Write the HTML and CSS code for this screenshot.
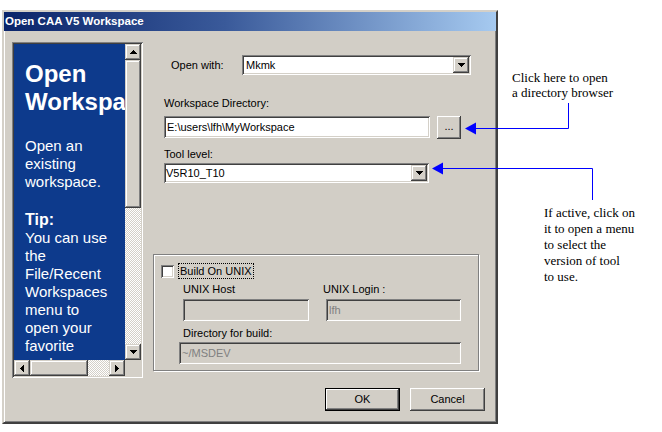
FILE: index.html
```html
<!DOCTYPE html>
<html>
<head>
<meta charset="utf-8">
<title>Open CAA V5 Workspace</title>
<link rel="stylesheet" href="styles.css">
</head>
<body>
<div class="page">
  <div class="dialog">
    <div class="titlebar">Open CAA V5 Workspace</div>
    <div class="body">
      <div class="main">
        <div class="helpframe">
          <div class="help">
            <div class="help-title">Open<br>Workspace</div>
            <p class="help-text first">Open an<br>existing<br>workspace.</p>
            <div class="help-tip">Tip:</div>
            <p class="help-text">You can use<br>the<br>File/Recent<br>Workspaces<br>menu to<br>open your<br>favorite<br>workspaces.</p>
          </div>
          <div class="vscroll">
            <div class="sbtn"><svg width="7" height="4" viewBox="0 0 7 4"><path d="M3 0h1v1H3zM2 1h3v1H2zM1 2h5v1H1zM0 3h7v1H0z"/></svg></div>
            <div class="sthumb vthumb"></div>
            <div class="track"></div>
            <div class="sbtn"><svg width="7" height="4" viewBox="0 0 7 4"><path d="M0 0h7v1H0zM1 1h5v1H1zM2 2h3v1H2zM3 3h1v1H3z"/></svg></div>
          </div>
          <div class="hscroll">
            <div class="sbtn"><svg width="4" height="7" viewBox="0 0 4 7"><path d="M0 3h1v1H0zM1 2h1v3H1zM2 1h1v5H2zM3 0h1v7H3z"/></svg></div>
            <div class="sthumb hthumb"></div>
            <div class="track htrack"></div>
            <div class="sbtn"><svg width="4" height="7" viewBox="0 0 4 7"><path d="M0 0h1v7H0zM1 1h1v5H1zM2 2h1v3H2zM3 3h1v1H3z"/></svg></div>
          </div>
          <div class="corner"></div>
        </div>

        <div class="form">
          <div class="openwith">
            <span class="ow-label">Open with:</span>
            <div class="combo combo-ow">
              <span class="combo-text">Mkmk</span>
              <div class="dropbtn"><svg width="7" height="4" viewBox="0 0 7 4"><path d="M0 0h7v1H0zM1 1h5v1H1zM2 2h3v1H2zM3 3h1v1H3z"/></svg></div>
            </div>
          </div>

          <div class="label ws-label">Workspace Directory:</div>
          <div class="ws-row">
            <div class="field ws-field">E:\users\lfh\MyWorkspace</div>
            <div class="btn browse">...</div>
          </div>

          <div class="label tool-label">Tool level:</div>
          <div class="combo combo-tool">
            <span class="combo-text tool-text">V5R10_T10</span>
            <div class="dropbtn"><svg width="7" height="4" viewBox="0 0 7 4"><path d="M0 0h7v1H0zM1 1h5v1H1zM2 2h3v1H2zM3 3h1v1H3z"/></svg></div>
          </div>

          <div class="group">
            <div class="check-row">
              <div class="checkbox"></div>
              <span class="focus">Build On UNIX</span>
            </div>
            <div class="unix-grid">
              <div class="glabel">UNIX Host</div>
              <div class="glabel login-label">UNIX Login :</div>
              <div class="field disabled host-field"></div>
              <div class="field disabled login-field">lfh</div>
            </div>
            <div class="glabel dir-label">Directory for build:</div>
            <div class="field disabled dir-field">~/MSDEV</div>
          </div>
        </div>
      </div>

      <div class="buttons">
        <div class="btn default">OK</div>
        <div class="btn">Cancel</div>
      </div>
    </div>
  </div>

  <svg class="arrows" width="662" height="432" viewBox="0 0 662 432">
    <path d="M475 128.5H568.5V103" fill="none" stroke="#0000ff" stroke-width="1"/>
    <polygon points="465,128.5 476,122.5 476,134.5" fill="#0000ff"/>
    <path d="M442 168.5H592.5V200" fill="none" stroke="#0000ff" stroke-width="1"/>
    <polygon points="432,168.5 443,162.5 443,174.5" fill="#0000ff"/>
  </svg>

  <div class="note note-browse">Click here to open<br>a directory browser</div>
  <div class="note note-tool">If active, click on<br>it to open a menu<br>to select the<br>version of tool<br>to use.</div>
</div>
</body>
</html>
```

FILE: styles.css
```css
* { box-sizing: border-box; }

html, body {
  margin: 0;
  padding: 0;
  background: #ffffff;
}

body {
  font-family: "Liberation Sans", Arial, sans-serif;
  font-size: 11px;
  color: #000;
}

.page {
  position: relative;
  width: 662px;
  height: 432px;
  padding: 10px 0 0 2px;
}

/* ---------- dialog frame ---------- */
.dialog {
  width: 496px;
  height: 414px;
  background: #d2cec6;
  border: 2px solid;
  border-color: #d4d0c8 #404040 #404040 #d4d0c8;
  box-shadow: inset 1px 1px 0 #ffffff, inset -1px -1px 0 #808080;
}

.titlebar {
  height: 19px;
  line-height: 19px;
  padding-left: 1px;
  color: #ffffff;
  font-weight: bold;
  font-size: 11.5px;
  background: linear-gradient(to right, #0a246a 0%, #3a5a9a 45%, #a6caf0 100%);
  white-space: nowrap;
}

.body {
  padding: 11px 0 0 8px;
}

.main {
  display: flex;
  gap: 10px;
}

/* ---------- help panel ---------- */
.helpframe {
  width: 131px;
  height: 336px;
  padding: 2px;
  box-shadow: inset 1px 1px 0 #808080, inset -1px -1px 0 #ffffff,
              inset 2px 2px 0 #404040, inset -2px -2px 0 #d4d0c8;
  display: grid;
  grid-template-columns: 111px 16px;
  grid-template-rows: 316px 16px;
}

.help {
  background: #0d3a8c;
  color: #ffffff;
  overflow: hidden;
  white-space: nowrap;
  padding: 16px 0 0 11px;
}

.help-title {
  font-size: 24px;
  font-weight: bold;
  line-height: 28px;
}

.help-text {
  margin: 0;
  font-size: 15px;
  line-height: 18px;
}

.help-text.first {
  margin-top: 21px;
}

.help-tip {
  margin-top: 20px;
  font-size: 16px;
  font-weight: bold;
  line-height: 18px;
}

.vscroll {
  display: flex;
  flex-direction: column;
}

.hscroll {
  display: flex;
}

.sbtn, .sthumb {
  width: 16px;
  height: 16px;
  flex: none;
  background: #d4d0c8;
  box-shadow: inset -1px -1px 0 #404040, inset 1px 1px 0 #d4d0c8,
              inset -2px -2px 0 #808080, inset 2px 2px 0 #ffffff;
  display: flex;
  align-items: center;
  justify-content: center;
}

.sbtn svg { display: block; fill: #000; }

.vthumb { height: 148px; }
.hthumb { width: 58px; }

.track {
  flex: 1;
  background-color: #d4d0c8;
  background-image: repeating-conic-gradient(#ffffff 0% 25%, #d4d0c8 0% 50%);
  background-size: 2px 2px;
}

.corner { background: #d4d0c8; }

/* ---------- form ---------- */
.form {
  width: 326px;
  display: flex;
  flex-direction: column;
}

.label {
  line-height: 13px;
  margin-left: 11px;
}

.openwith {
  margin-top: 13px;
  height: 20px;
  display: flex;
  align-items: center;
}

.ow-label {
  width: 89px;
  padding-left: 18px;
}

.combo {
  height: 20px;
  background: #ffffff;
  padding: 2px;
  display: flex;
  align-items: center;
  box-shadow: inset 1px 1px 0 #808080, inset -1px -1px 0 #ffffff,
              inset 2px 2px 0 #404040, inset -2px -2px 0 #d4d0c8;
}

.combo-ow { width: 229px; }

.combo-tool {
  width: 265px;
  margin-left: 11px;
  margin-top: 2px;
}

.combo-text {
  flex: 1;
  padding-left: 2px;
  line-height: 16px;
}

.tool-text { padding-left: 0; }

.dropbtn {
  width: 16px;
  height: 16px;
  background: #d4d0c8;
  box-shadow: inset -1px -1px 0 #404040, inset 1px 1px 0 #d4d0c8,
              inset -2px -2px 0 #808080, inset 2px 2px 0 #ffffff;
  display: flex;
  align-items: center;
  justify-content: center;
}

.dropbtn svg { display: block; fill: #000; }

.ws-label { margin-top: 22px; }

.ws-row {
  margin-top: 6px;
  margin-left: 11px;
  display: flex;
  align-items: flex-start;
  gap: 7px;
}

.field {
  height: 22px;
  line-height: 18px;
  padding: 2px 2px 2px 3px;
  background: #ffffff;
  white-space: nowrap;
  box-shadow: inset 1px 1px 0 #808080, inset -1px -1px 0 #ffffff,
              inset 2px 2px 0 #404040, inset -2px -2px 0 #d4d0c8;
}

.field.disabled {
  background: #d2cec6;
  color: #808080;
}

.ws-field { width: 266px; padding-left: 3px; }

.btn {
  width: 75px;
  height: 23px;
  line-height: 23px;
  text-align: center;
  background: #d2cec6;
  box-shadow: inset -1px -1px 0 #404040, inset 1px 1px 0 #ffffff,
              inset -2px -2px 0 #808080, inset 2px 2px 0 #d4d0c8;
}

.btn.browse {
  width: 24px;
  line-height: 21px;
}

.btn.default {
  box-shadow: inset 0 0 0 1px #000000, inset -2px -2px 0 #404040,
              inset 2px 2px 0 #ffffff, inset -3px -3px 0 #808080;
}

.tool-label { margin-top: 9px; }

/* ---------- group box ---------- */
.group {
  margin-top: 71px;
  width: 326px;
  height: 117px;
  border: 1px solid #808080;
  box-shadow: inset 1px 1px 0 #ffffff, 1px 1px 0 #ffffff;
}

.check-row {
  margin-top: 8px;
  padding-left: 7px;
  height: 16px;
  display: flex;
  align-items: center;
  gap: 4px;
}

.checkbox {
  width: 13px;
  height: 13px;
  background: #ffffff;
  box-shadow: inset 1px 1px 0 #808080, inset -1px -1px 0 #ffffff,
              inset 2px 2px 0 #404040, inset -2px -2px 0 #d4d0c8;
}

.focus {
  height: 16px;
  line-height: 14px;
  padding: 0 1px;
  border: 1px dotted #000000;
}

.unix-grid {
  margin-top: 4px;
  padding-left: 29px;
  display: grid;
  grid-template-columns: 126px 135px;
  column-gap: 17px;
  row-gap: 3px;
}

.glabel {
  line-height: 13px;
}

.login-label { margin-left: -3px; }

.dir-label {
  margin-top: 6px;
  margin-left: 29px;
}

.dir-field {
  margin-top: 2px;
  margin-left: 25px;
  width: 282px;
}

/* ---------- buttons ---------- */
.buttons {
  margin-top: 10px;
  padding-right: 11px;
  display: flex;
  justify-content: flex-end;
  gap: 10px;
}

/* ---------- annotations ---------- */
.arrows {
  position: absolute;
  left: 0;
  top: 0;
  pointer-events: none;
}

.note {
  position: absolute;
  font-family: "Liberation Serif", "Times New Roman", serif;
  font-size: 13px;
  color: #000000;
  white-space: nowrap;
}

.note-browse {
  left: 512px;
  top: 70px;
  line-height: 15px;
}

.note-tool {
  left: 544px;
  top: 205px;
  line-height: 16px;
}
```
